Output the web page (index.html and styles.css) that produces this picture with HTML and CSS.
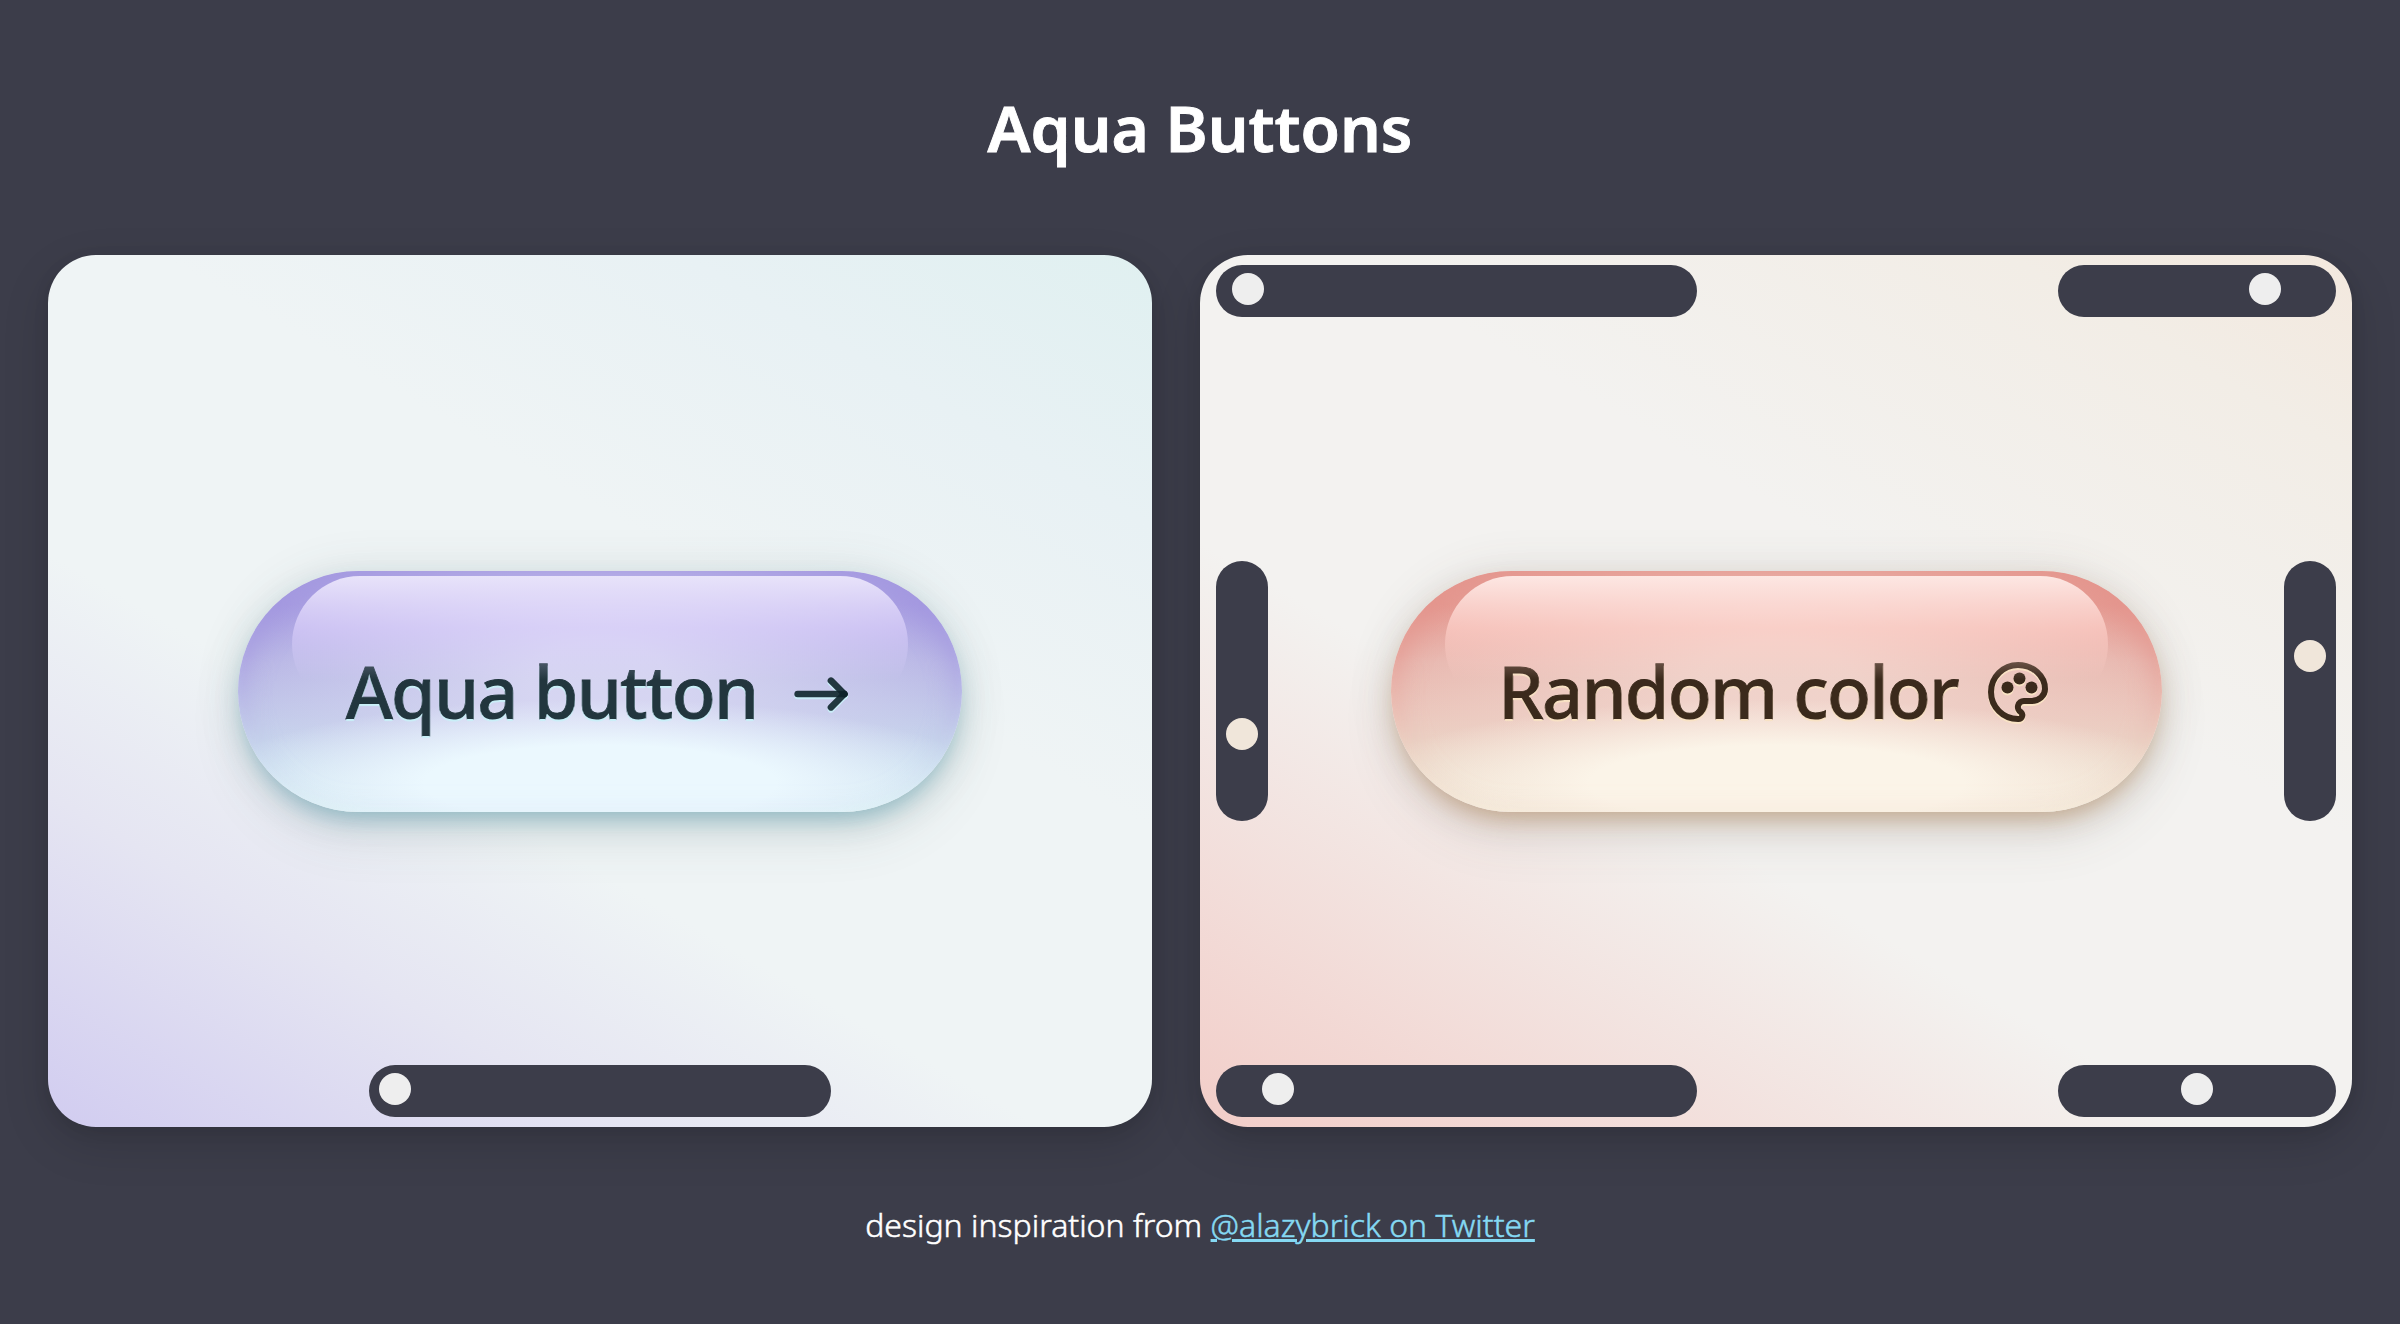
FILE: index.html
```
<!DOCTYPE html>
<html lang="en">
<head>
<meta charset="utf-8">
<title>Aqua Buttons</title>
<link rel="stylesheet" href="styles.css">
</head>
<body>
<h1 class="title">Aqua Buttons</h1>
<main class="cards">
  <section class="card card-cool">
    <button class="aqua cool" type="button">
      <span class="label">Aqua button</span>
      <svg class="icon icon-arrow" viewBox="0 0 24 24" aria-hidden="true"><path d="M5 12H19"/><path d="M15 16L19 12"/><path d="M15 8L19 12"/></svg>
    </button>
    <div class="slider hue"><i class="thumb"></i></div>
  </section>
  <section class="card card-warm">
    <button class="aqua warm" type="button">
      <span class="label">Random color</span>
      <svg class="icon" viewBox="0 0 24 24" aria-hidden="true"><path d="M12 21a9 9 0 0 1 0-18c4.97 0 9 3.582 9 8c0 1.06-.474 2.078-1.318 2.828c-.844.75-1.989 1.172-3.182 1.172h-2.5a2 2 0 0 0-1 3.75a1.3 1.3 0 0 1-1 2.25"/><circle class="dot" cx="8.5" cy="10.5" r="2"/><circle class="dot" cx="12.5" cy="7.5" r="2"/><circle class="dot" cx="16.5" cy="10.5" r="2"/></svg>
    </button>
    <div class="slider top-left"><i class="thumb"></i></div>
    <div class="slider top-right"><i class="thumb"></i></div>
    <div class="slider vertical left"><i class="thumb"></i></div>
    <div class="slider vertical right"><i class="thumb"></i></div>
    <div class="slider bottom-left"><i class="thumb"></i></div>
    <div class="slider bottom-right"><i class="thumb"></i></div>
  </section>
</main>
<footer class="credit">design inspiration from <a href="#">@alazybrick on Twitter</a></footer>
</body>
</html>
```
FILE: styles.css
```
* { box-sizing: border-box; }
body {
  margin: 0;
  height: 1324px;
  padding: 0 48px;
  display: grid;
  grid-template-rows: 255px 872px 197px;
  overflow: hidden;
  background: #3c3d4a;
  color: #fff;
  font-family: "Noto Sans", sans-serif;
}
.title {
  margin: 0;
  align-self: center;
  text-align: center;
  font-size: 64px;
  line-height: 1.3;
  font-weight: 600;
  -webkit-text-stroke: .9px;
}
.cards { display: grid; grid-template-columns: 1104px 1152px; gap: 48px; }
.card {
  position: relative;
  display: grid;
  place-items: center;
  padding-top: 1px;
  border-radius: 48px;
  box-shadow: 0 16px 48px rgba(0, 0, 10, .14), 0 4px 16px rgba(0, 0, 10, .08);
}
.card-cool { background: linear-gradient(30deg, #d1ccf0, #e5e5f2 22%, #eff4f5 38%, #eff4f5 62%, #e8f1f4 82%, #dff0f0 102%); }
.card-warm { background: linear-gradient(30deg, #f2cdc8, #f3f2f0 38%, #f3f2f0 62%, #f2ede6 87%, #f3e7dc 103%); }

.aqua {
  position: relative;
  isolation: isolate;
  width: 724px;
  height: 241px;
  padding: 0;
  border: 0;
  border-radius: 121px;
  display: flex;
  align-items: center;
  justify-content: center;
  gap: 24px;
  font: 500 72px/1.3 "Noto Sans", sans-serif;
  color: var(--ink);
  background:
    radial-gradient(ellipse 54% 35% at 50% 88%, var(--glow) 45%, transparent 100%),
    radial-gradient(ellipse 48% 84% at 50% 46%, var(--haze) 20%, transparent 100%),
    linear-gradient(var(--c0), var(--c0) 14%, var(--c1) 38%, var(--c2) 58%, var(--c3) 80%, var(--c4) 100%);
  box-shadow: 0 12px 24px -6px var(--drop), 0 26px 52px var(--drop-far), 0 0 48px var(--drop-far);
}
.cool {
  padding-left: 7px;
  --ink: #22363e; --c0: #a499e0; --c1: #b9b7e5; --c2: #c2c8e9; --c3: #cadcee; --c4: #daf0f4;
  --glow: #ebf8fe; --haze: rgba(215, 214, 242, .95); --edge: #a499e0; --rim: #d3edf3;
  --shine: #e8e3fa; --shine-mid: rgba(220, 209, 251, .66); --shine-end: rgba(220, 209, 251, 0);
  --drop: rgba(76, 150, 168, .52); --drop-far: rgba(60, 90, 90, .11); --cast: #c9f0f8;
}
.warm {
  width: 771px;
  --ink: #3b2a1c; --c0: #e4968e; --c1: #e8b8b0; --c2: #ebc7bd; --c3: #ebd8c9; --c4: #f1e7d6;
  --glow: #fbf4e8; --haze: rgba(240, 211, 203, .95); --edge: #e4968e; --rim: #f4e2ca;
  --shine: #fde7e3; --shine-mid: rgba(253, 208, 201, .7); --shine-end: rgba(253, 208, 201, 0);
  --drop: rgba(170, 122, 70, .5); --drop-far: rgba(90, 75, 60, .11); --cast: #f9e3c4;
}
/* coloured rim: deep at the top, light at the bottom */
.aqua::before {
  content: "";
  position: absolute;
  inset: 0;
  z-index: -1;
  border-radius: inherit;
  box-shadow: inset 0 -10px 12px -6px var(--rim), inset 0 4px 32px var(--edge);
  mask-image: linear-gradient(#000 35%, rgba(0, 0, 0, .15) 72%);
}
/* glass highlight lying over the label */
.aqua::after {
  content: "";
  position: absolute;
  top: 5px;
  left: 54px;
  right: 54px;
  height: 136px;
  border-radius: 68px;
  background: linear-gradient(var(--shine), var(--shine-mid) 38%, var(--shine-end) 76%);
}
.label {
  white-space: nowrap;
  letter-spacing: -1.75px;
  text-shadow: 0 2px 1px var(--cast);
  -webkit-text-stroke: .9px;
  paint-order: stroke fill;
}
.icon {
  width: 72px;
  height: 72px;
  flex: none;
  fill: none;
  stroke: currentColor;
  stroke-width: 2;
  stroke-linecap: round;
  stroke-linejoin: round;
  filter: drop-shadow(0 2px 0 var(--cast));
}
.icon-arrow { width: 80px; height: 80px; margin-top: 4px; stroke: rgba(14, 35, 43, .9); }
.dot { fill: currentColor; stroke: none; }

/* sliders pinned over the card edges */
.slider {
  position: absolute;
  height: 52px;
  border-radius: 26px;
  background: #3c3d4a;
  display: flex;
  padding: 8px 0 0 var(--at);
}
.thumb { width: 32px; height: 32px; border-radius: 50%; background: #eee; }
.hue { left: 321px; bottom: 10px; width: 462px; --at: 10px; }
.top-left { left: 16px; top: 10px; width: 481px; --at: 16px; }
.top-right { right: 16px; top: 10px; width: 278px; --at: 191px; }
.bottom-left { left: 16px; bottom: 10px; width: 481px; --at: 46px; }
.bottom-right { right: 16px; bottom: 10px; width: 278px; --at: 123px; }
.vertical { top: 306px; width: 52px; height: 260px; padding: var(--at) 0 0 10px; }
.vertical .thumb { background: #f0e6da; }
.left { left: 16px; --at: 157px; }
.right { right: 16px; --at: 79px; }

.credit {
  text-align: center;
  padding-top: 76px;
  font-size: 32px;
  line-height: 44px;
  font-weight: 300;
  -webkit-text-stroke: .5px;
}
.credit a { color: #85d9f3; text-decoration-thickness: 3px; }
```
